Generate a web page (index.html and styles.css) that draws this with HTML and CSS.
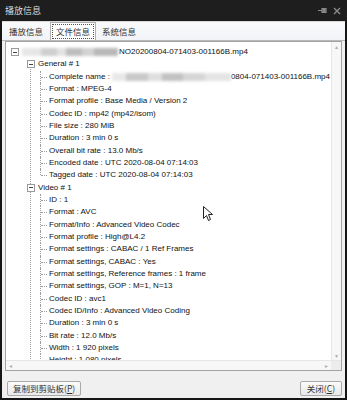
FILE: index.html
```html
<!DOCTYPE html>
<html lang="zh-CN">
<head>
    <meta charset="utf-8">
    <meta name="viewport" content="width=device-width,initial-scale=1.0">
    <link rel="stylesheet" href="styles.css">
</head>
<body>
<div class="window">
    <div class="titlebar">
        <span class="title">播放信息</span>
        <span class="tb-icons">
            <svg width="9" height="7" viewBox="0 0 9 7"><path d="M0 3.5h4M4 1v5M4 1.5h4v4H4" fill="none" stroke="#8a8a8a" stroke-width="1.2"/><rect x="4.5" y="2" width="3" height="3" fill="#8a8a8a"/></svg>
            <svg width="8" height="8" viewBox="0 0 8 8"><path d="M1 1l6 6M7 1L1 7" stroke="#8a8a8a" stroke-width="1.4"/></svg>
        </span>
    </div>
    <div class="tabs">
        <span class="tab">播放信息</span>
        <span class="tab active"><span class="focus">文件信息</span></span>
        <span class="tab">系统信息</span>
    </div>
    <div class="panel">
        <div class="panel-main">
            <div class="tree">
                <div class="row root"><span class="box"></span><span class="blur b1"></span><span>NO20200804-071403-001166B.mp4</span></div>
                <ul class="lvl1">
                    <li>
                        <div class="row"><span class="box"></span>General # 1</div>
                        <ul class="kids">
                            <li><div class="row">Complete name : <span class="blur b2"></span>0804-071403-001166B.mp4</div></li>
                            <li><div class="row">Format : MPEG-4</div></li>
                            <li><div class="row">Format profile : Base Media / Version 2</div></li>
                            <li><div class="row">Codec ID : mp42 (mp42/isom)</div></li>
                            <li><div class="row">File size : 280 MiB</div></li>
                            <li><div class="row">Duration : 3 min 0 s</div></li>
                            <li><div class="row">Overall bit rate : 13.0 Mb/s</div></li>
                            <li><div class="row">Encoded date : UTC 2020-08-04 07:14:03</div></li>
                            <li><div class="row">Tagged date : UTC 2020-08-04 07:14:03</div></li>
                        </ul>
                    </li>
                    <li>
                        <div class="row"><span class="box"></span>Video # 1</div>
                        <ul class="kids open">
                            <li><div class="row">ID : 1</div></li>
                            <li><div class="row">Format : AVC</div></li>
                            <li><div class="row">Format/Info : Advanced Video Codec</div></li>
                            <li><div class="row">Format profile : High@L4.2</div></li>
                            <li><div class="row">Format settings : CABAC / 1 Ref Frames</div></li>
                            <li><div class="row">Format settings, CABAC : Yes</div></li>
                            <li><div class="row">Format settings, Reference frames : 1 frame</div></li>
                            <li><div class="row">Format settings, GOP : M=1, N=13</div></li>
                            <li><div class="row">Codec ID : avc1</div></li>
                            <li><div class="row">Codec ID/Info : Advanced Video Coding</div></li>
                            <li><div class="row">Duration : 3 min 0 s</div></li>
                            <li><div class="row">Bit rate : 12.0 Mb/s</div></li>
                            <li><div class="row">Width : 1 920 pixels</div></li>
                            <li><div class="row">Height : 1 080 pixels</div></li>
                        </ul>
                    </li>
                </ul>
            </div>
            <div class="vscroll">
                <span class="arrow">&#9652;</span>
                <span class="track"></span>
                <span class="arrow">&#9662;</span>
            </div>
        </div>
        <div class="hscroll">
            <span class="arrow">&#9666;</span>
            <span class="track"></span>
            <span class="arrow">&#9656;</span>
            <span class="corner"></span>
        </div>
    </div>
    <div class="footer">
        <button class="btn">复制到剪贴板(<u>P</u>)</button>
        <button class="btn">关闭(<u>C</u>)</button>
    </div>
    <svg class="cursor" width="11" height="16" viewBox="0 0 11 16"><path d="M0.5 0.5v12l3-3 2 5 2-1-2-5h4z" fill="#fff" stroke="#222" stroke-width="1"/></svg>
</div>
</body>
</html>
```

FILE: styles.css
```css
html, body {margin: 0; padding: 0; background: #111;}
.window {position: relative; width: 347px; height: 400px; box-sizing: border-box; border: 2px solid #151515; border-top: 0; background: #f0f0f0; display: flex; flex-direction: column; font-family: "Noto Sans CJK SC", sans-serif;}
.titlebar {height: 21px; flex: none; background: #1e1e1e; display: flex; align-items: center; justify-content: space-between; padding: 0 6px 0 5px; margin: 0 -2px;}
.title {color: #dcdcdc; font-size: 9px;}
.tb-icons {display: flex; align-items: center; gap: 6px;}
.tabs {height: 20px; flex: none; display: flex; align-items: flex-end; padding-left: 3px; background: linear-gradient(#f9fafb, #f1f3f6); border-bottom: 1px solid #b9b9b9; border-top: 1px solid #d8d8d8; box-sizing: border-box;}
.tab {font-size: 8.5px; color: #333; padding: 0 4px; height: 17px; line-height: 17px; margin-right: 2px; box-sizing: border-box;}
.tab:first-child {padding-right: 5px;}
.tab.active {background: #fff; border: 1px solid #b0b0b0; border-bottom: 0; height: 18px; line-height: 14px; padding: 1px 1px 0;}
.focus {display: inline-block; border: 1px dotted #555; padding: 0 3px; line-height: 13px;}
.panel {flex: none; height: 330px; margin: 0 3px; background: #fff; border: 1px solid #a3a3a3; display: flex; flex-direction: column; box-sizing: border-box;}
.panel-main {flex: 1; display: flex; min-height: 0;}
.tree {flex: 1; overflow: hidden; padding: 4px 0 0 5px; font-family: "Liberation Sans", Arial, sans-serif; font-size: 8px; color: #111;}
.tree ul {list-style: none; margin: 0; padding: 0;}
.row {height: 12.33px; line-height: 12.33px; white-space: nowrap; display: flex; align-items: center;}
.box {width: 6px; height: 6px; border: 1px solid #9a9a9a; background: #fff; position: relative; flex: none; margin-right: 3px;}
.box::after {content: ""; position: absolute; left: 1px; right: 1px; top: 2.5px; border-top: 1px solid #444;}
.blur {display: inline-block; height: 8px; filter: blur(1.5px); flex: none;}
.b1 {width: 96px; margin-right: 1px; background: linear-gradient(90deg, #e6e6e6 0 20%, #cfcfcf 20% 36%, #e2e2e2 36% 46%, #bdbdbd 46% 62%, #d2d2d2 62% 75%, #b8b8b8 75% 100%);}
.b2 {width: 119px; margin-left: 2px; background: linear-gradient(90deg, #e8e8e8 0 12%, #c8c8c8 12% 30%, #dedede 30% 42%, #c2c2c2 42% 60%, #d6d6d6 60% 78%, #e4e4e4 78% 100%);}
.lvl1 {margin-left: 16px !important;}
.lvl1 > li {position: relative;}
.lvl1 > li::before {content: ""; position: absolute; left: 3px; top: 6px; bottom: -6px; border-left: 1px dotted #9c9c9c;}
.lvl1 > li > .row .box {z-index: 1;}
.kids {margin-left: 13px !important;}
.kids > li {position: relative; padding-left: 9px;}
.kids > li::before {content: ""; position: absolute; left: 0; top: 0; bottom: 0; border-left: 1px dotted #9c9c9c;}
.kids > li:last-child::before {bottom: auto; height: 6px;}
.kids.open > li:last-child::before {bottom: 0; height: auto;}
.kids > li::after {content: ""; position: absolute; left: 1px; top: 6px; width: 6px; border-top: 1px dotted #9c9c9c;}
.vscroll {width: 9px; flex: none; display: flex; flex-direction: column; background: #f7f7f7; border-left: 1px solid #e6e6e6;}
.hscroll {height: 9px; flex: none; display: flex; background: #f7f7f7; border-top: 1px solid #e6e6e6;}
.arrow {font-size: 6px; color: #b0b0b0; line-height: 9px; width: 9px; height: 9px; text-align: center; flex: none;}
.track {flex: 1;}
.corner {width: 10px; background: #ececec; flex: none;}
.footer {flex: 1; display: flex; justify-content: space-between; align-items: flex-end; padding: 0 3px 2px 5px;}
.btn {font-family: "Noto Sans CJK SC", sans-serif; font-size: 8.5px; color: #333; height: 15px; line-height: 13px; white-space: nowrap; padding: 0 5px; border: 1px solid #a9a9a9; border-radius: 2px; background: linear-gradient(#fbfbfb, #e9e9e9); margin: 0;}
.btn u {text-underline-offset: 1px;}
.btn:last-child {padding: 0 6px;}
.cursor {position: absolute; left: 201px; top: 206px;}
```
